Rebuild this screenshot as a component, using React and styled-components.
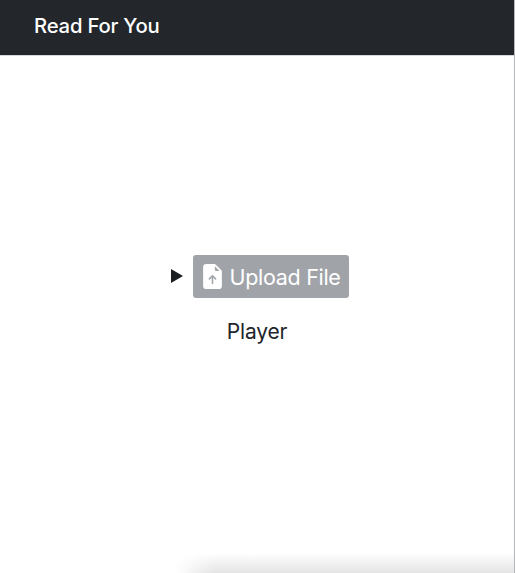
import React from "react";
import styled, { createGlobalStyle } from "styled-components";
import { BsFileEarmarkArrowUpFill } from "react-icons/bs";

const GlobalStyle = createGlobalStyle`
  html, body {
    margin: 0;
    padding: 0;
    background: #fff;
  }
`;

const Page = styled.div`
  position: relative;
  width: 515px;
  height: 573px;
  overflow: hidden;
  display: flex;
  flex-direction: column;
  box-sizing: border-box;
  border-right: 1px solid #b4b6b8;
  font-family: Inter, "Liberation Sans", sans-serif;
  color: #212529;
`;

const NavBar = styled.header`
  height: 56px;
  flex: none;
  display: flex;
  align-items: center;
  padding: 0 0 5px 34px;
  background: #23272c;
  border-bottom: 1px solid #d8d9da;
  box-sizing: border-box;
`;

const Brand = styled.span`
  color: #fff;
  font-size: 20.3px;
  font-weight: 500;
  letter-spacing: -0.2px;
`;

const Content = styled.main`
  flex: 1;
  display: flex;
  flex-direction: column;
  align-items: center;
  padding-top: 199px;
`;

const UploadRow = styled.div`
  display: flex;
  align-items: center;
  gap: 10px;
  margin-left: 5px;
`;

const PlayMark = styled.svg`
  width: 12px;
  height: 14px;
  margin-top: -2px;
  display: block;
`;

const UploadButton = styled.button`
  width: 156px;
  height: 43px;
  display: flex;
  align-items: center;
  gap: 5px;
  padding: 0 0 0 7px;
  border: none;
  border-radius: 3px;
  background: #a0a4a9;
  color: #fff;
  font-family: inherit;
  font-size: 21.5px;
  font-weight: 400;
  letter-spacing: -0.3px;
  white-space: nowrap;
`;

const PlayerLabel = styled.div`
  margin-top: 20px;
  font-size: 21px;
  line-height: 28px;
  letter-spacing: -0.2px;
`;

const BottomShadow = styled.div`
  position: absolute;
  left: 175px;
  right: 0;
  bottom: 0;
  height: 20px;
  background: linear-gradient(to bottom, rgba(228, 228, 228, 0), rgba(228, 228, 228, 1));
  -webkit-mask-image: linear-gradient(to right, transparent, #000 40px);
  mask-image: linear-gradient(to right, transparent, #000 40px);
`;

export default function App() {
  return (
    <>
      <GlobalStyle />
      <Page>
        <NavBar>
          <Brand>Read For You</Brand>
        </NavBar>
        <Content>
          <UploadRow>
            <PlayMark viewBox="0 0 12 14">
              <path d="M0 0 L12 7 L0 14 Z" fill="#1c1f22" />
            </PlayMark>
            <UploadButton type="button">
              <BsFileEarmarkArrowUpFill size={25} />
              Upload File
            </UploadButton>
          </UploadRow>
          <PlayerLabel>Player</PlayerLabel>
        </Content>
        <BottomShadow />
      </Page>
    </>
  );
}
